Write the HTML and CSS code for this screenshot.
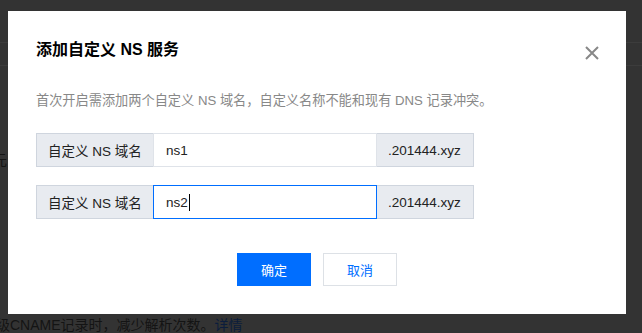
FILE: index.html
```html
<!DOCTYPE html>
<html lang="zh-CN">
<head>
<meta charset="utf-8">
<title>添加自定义 NS 服务</title>
<link rel="stylesheet" href="styles.css">
</head>
<body>
<div class="page">
  <div class="page-header"></div>
  <div class="page-subbar"></div>
  <div class="page-body">
    <div class="page-row">元</div>
    <div class="page-tip">级CNAME记录时，减少解析次数。<span class="page-link">详情</span></div>
  </div>
</div>

<div class="dialog">
  <div class="dialog-head">
    <h3 class="dialog-title">添加自定义 NS 服务</h3>
    <span class="dialog-close">
      <svg width="14" height="14" viewBox="0 0 14 14"><path d="M1 1L13 13M13 1L1 13" stroke="#888" stroke-width="2" fill="none"/></svg>
    </span>
  </div>
  <p class="dialog-desc">首次开启需添加两个自定义 NS 域名，自定义名称不能和现有 DNS 记录冲突。</p>
  <div class="field">
    <div class="addon addon-left">自定义 NS 域名</div>
    <div class="input">ns1</div>
    <div class="addon addon-right">.201444.xyz</div>
  </div>
  <div class="field">
    <div class="addon addon-left">自定义 NS 域名</div>
    <div class="input input-focus">ns2<span class="caret"></span></div>
    <div class="addon addon-right">.201444.xyz</div>
  </div>
  <div class="dialog-foot">
    <button class="btn btn-primary">确定</button>
    <button class="btn btn-weak">取消</button>
  </div>
</div>
</body>
</html>
```

FILE: styles.css
```css
html, body {
  margin: 0;
  padding: 0;
}
body {
  width: 642px;
  height: 333px;
  overflow: hidden;
  background: #333333;
  font-family: "Liberation Sans", "Noto Sans CJK SC", sans-serif;
  position: relative;
}
.page {
  display: flex;
  flex-direction: column;
  height: 333px;
}
.page-header {
  height: 43px;
  border-bottom: 1px solid #3c3c3c;
}
.page-subbar {
  height: 22px;
  border-bottom: 1px solid #3c3c3c;
}
.page-body {
  flex: 1;
  display: flex;
  flex-direction: column;
}
.page-row {
  margin-top: 86px;
  margin-left: -7px;
  font-size: 14px;
  color: #141414;
  line-height: 16px;
}
.page-tip {
  margin-top: 149px;
  margin-left: -4px;
  font-size: 14px;
  line-height: 16px;
  color: #141414;
  white-space: nowrap;
}
.page-link {
  color: #0b1d3c;
}

.dialog {
  position: absolute;
  left: 8px;
  top: 11px;
  width: 618px;
  height: 303px;
  box-sizing: border-box;
  background: #fff;
  padding: 27px 28px 28px;
  display: flex;
  flex-direction: column;
}
.dialog-head {
  display: flex;
  align-items: center;
  justify-content: space-between;
  height: 24px;
}
.dialog-title {
  margin: 0;
  font-size: 16px;
  font-weight: bold;
  color: #000;
  line-height: 24px;
}
.dialog-close {
  display: flex;
  width: 14px;
  height: 14px;
  margin-right: -1px;
  margin-top: 6px;
}
.dialog-desc {
  margin: 30px 0 0;
  font-size: 13.2px;
  line-height: 18px;
  color: #888;
}
.field {
  display: flex;
  height: 34px;
  margin-top: 23px;
  font-size: 13.5px;
}
.field + .field {
  margin-top: 18px;
}
.addon {
  display: flex;
  align-items: center;
  box-sizing: border-box;
  background: #e8ebf0;
  border: 1px solid #cfd5de;
  color: #222;
  padding: 0 11px;
}
.addon-left {
  width: 117px;
  border-right: none;
}
.addon-right {
  width: 97px;
  border-left: none;
}
.input {
  display: flex;
  align-items: center;
  box-sizing: border-box;
  width: 224px;
  border: 1px solid #dfe3e9;
  padding: 0 12px;
  color: #222;
  font-size: 13.5px;
}
.input-focus {
  border-color: #006eff;
}
.caret {
  display: inline-block;
  width: 1px;
  height: 17px;
  background: #000;
  margin-left: 1px;
}
.dialog-foot {
  margin-top: 34px;
  display: flex;
  justify-content: center;
  gap: 12px;
}
.btn {
  width: 74px;
  height: 33px;
  box-sizing: border-box;
  font-family: inherit;
  font-size: 13px;
  border: 1px solid transparent;
  padding: 0;
  cursor: pointer;
}
.btn-primary {
  background: #006eff;
  color: #fff;
  border-color: #006eff;
}
.btn-weak {
  background: #fff;
  color: #006eff;
  border-color: #dde1e6;
}
```
